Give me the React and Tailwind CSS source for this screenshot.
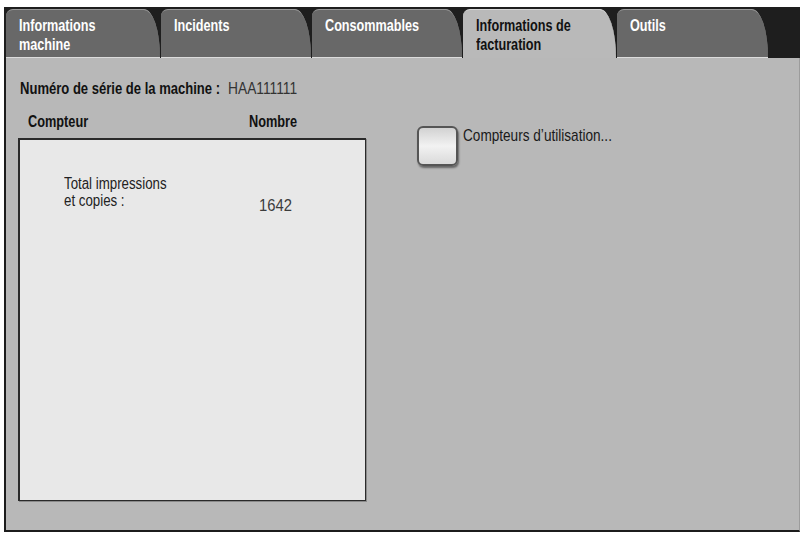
import React from 'react';

// the screen uses a condensed Helvetica; Liberation Sans squeezed horizontally gets close
const Cond = ({ className = '', children }) => (
    <div className={`origin-left whitespace-nowrap ${className}`}>{children}</div>
);

const tabs = [
    { label: ['Informations', 'machine'], w: 'w-[154px]' },
    { label: ['Incidents'], w: 'w-[150px]' },
    { label: ['Consommables'], w: 'w-[150px]' },
    { label: ['Informations de', 'facturation'], w: 'w-[153px]', active: true },
    { label: ['Outils'], w: 'w-[151px]' },
];

const Tab = ({ label, w, active }) => (
    <div
        className={`${w} h-[49px] rounded-tl-[7px] rounded-tr-[16px_48px] pl-[13px] pt-[7px] text-[16px] font-bold leading-[18.5px] ${
            active
                ? 'bg-[#b9b9b9] text-[#111] border-t border-[#d8d8d8]'
                : 'bg-[#686868] text-white border-t border-[#9a9a9a] border-b border-b-[#dcdcdc]'
        }`}
    >
        <Cond className="scale-x-[0.79]">
            {label.map(l => <div key={l}>{l}</div>)}
        </Cond>
    </div>
);

export default function App() {
    return (
        <div className="w-[803px] h-[537px] bg-white pt-[7px] pl-[4px]" style={{ fontFamily: '"Liberation Sans", Arial, sans-serif' }}>
            <div className="w-[796px] h-[525px] flex flex-col">
                {/* tab strip */}
                <div className="h-[51px] bg-[#1e1e1e] flex items-end gap-[1px] pl-[2px]">
                    {tabs.map(t => <Tab key={t.label.join()} {...t} />)}
                </div>

                {/* panel */}
                <div className="flex-1 bg-[#b8b8b8] border-l-2 border-b-2 border-[#1c1c1c] border-r border-r-[#9c9c9c] pl-[12px] pt-[21px] flex">
                    <div className="w-[348px] flex flex-col">
                        <div className="flex pl-[2px] text-[17px] leading-[20px]">
                            <Cond className="font-bold text-[#111] scale-x-[0.767] w-[208px]">Numéro de série de la machine :</Cond>
                            <Cond className="text-[#333] scale-x-[0.81]">HAA111111</Cond>
                        </div>
                        <div className="flex mt-[13px] pl-[10px] text-[17px] font-bold leading-[20px] text-[#111]">
                            <Cond className="w-[221px] scale-x-[0.75]">Compteur</Cond>
                            <Cond className="scale-x-[0.75]">Nombre</Cond>
                        </div>
                        <div className="mt-[6px] h-[363px] bg-[#e8e8e8] border border-[#2a2a2a] border-t-2 border-l-2 shadow-[1px_1px_0_#8a8a8a] pl-[44px] pt-[35px]">
                            <div className="flex items-start text-[16px] leading-[17px] text-[#222]">
                                <Cond className="w-[195px] scale-x-[0.83]">
                                    <div>Total impressions</div>
                                    <div>et copies :</div>
                                </Cond>
                                <Cond className="pt-[22px] text-[17px] text-[#3c3c3c] scale-x-[0.87]">1642</Cond>
                            </div>
                        </div>
                    </div>

                    <div className="ml-[51px] mt-[47px] flex items-start gap-[5px]">
                        <div className="w-[41px] h-[40px] rounded-[6px] border-2 border-[#555] bg-gradient-to-b from-[#d2d2d2] via-[#f2f2f2] to-[#dadada] shadow-[1px_2px_2px_rgba(0,0,0,0.45)]" />
                        <Cond className="mt-[1px] text-[17px] leading-[18px] text-[#1a1a1a] scale-x-[0.8]">Compteurs d’utilisation...</Cond>
                    </div>
                </div>
            </div>
        </div>
    );
}
